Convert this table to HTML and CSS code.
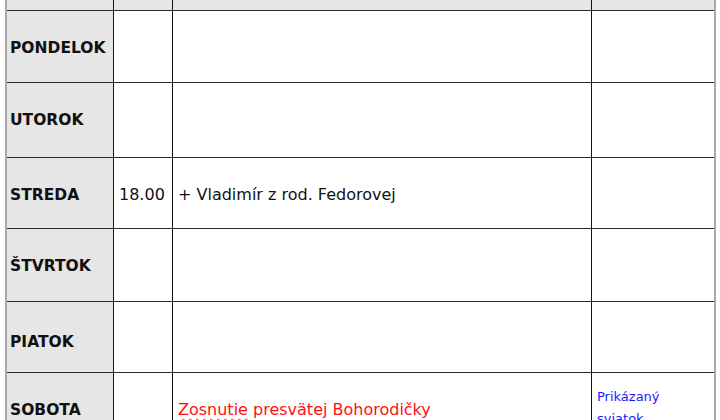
FILE: index.html
```html
<!DOCTYPE html>
<html lang="sk">
<head>
<meta charset="utf-8">
<title>Rozpis</title>
<link rel="stylesheet" href="styles.css">
</head>
<body>
<div class="sheet">
  <div class="cell head c1"></div>
  <div class="cell head c2"></div>
  <div class="cell head c3"></div>
  <div class="cell head c4"></div>

  <div class="cell day r1">PONDELOK</div>
  <div class="cell c2 r1"></div>
  <div class="cell c3 r1"></div>
  <div class="cell c4 r1"></div>

  <div class="cell day r2">UTOROK</div>
  <div class="cell c2 r2"></div>
  <div class="cell c3 r2"></div>
  <div class="cell c4 r2"></div>

  <div class="cell day r3">STREDA</div>
  <div class="cell c2 r3">18.00</div>
  <div class="cell c3 r3">+ Vladimír z rod. Fedorovej</div>
  <div class="cell c4 r3"></div>

  <div class="cell day r4">ŠTVRTOK</div>
  <div class="cell c2 r4"></div>
  <div class="cell c3 r4"></div>
  <div class="cell c4 r4"></div>

  <div class="cell day r5">PIATOK</div>
  <div class="cell c2 r5"></div>
  <div class="cell c3 r5"></div>
  <div class="cell c4 r5"></div>

  <div class="cell day r6">SOBOTA</div>
  <div class="cell c2 r6"></div>
  <div class="cell c3 r6"><span class="feast"><span class="spell">Zosnutie</span> presvätej Bohorodičky</span></div>
  <div class="cell c4 r6 note">Prikázaný sviatok</div>
</div>
</body>
</html>
```
FILE: styles.css
```css
html, body {
  margin: 0;
  padding: 0;
  background: #ffffff;
  overflow: hidden;
}

.sheet {
  margin-left: 5px;
  width: 707px;
  border-left: 2px solid #a8a8a8;
  border-right: 2px solid #a8a8a8;
  display: grid;
  grid-template-columns: 107px 59px 419px 122px;
  grid-template-rows: 11px 72px 75px 71px 73px 71px 80px;
  font-family: "DejaVu Sans", sans-serif;
  font-size: 16px;
  color: #111;
}

.cell {
  box-sizing: border-box;
  border-right: 1px solid #111111;
  border-bottom: 1px solid #2a2a2a;
  padding: 26px 5px 0 5px;
  line-height: 22px;
  white-space: nowrap;
}

.c4 {
  border-right: none;
}

.head {
  background: #e6e6e6;
  padding: 0;
}

.day {
  background: #e6e6e6;
  font-weight: bold;
  font-size: 15.5px;
  padding-left: 3px;
}

.r5 {
  padding-top: 29px;
}

.feast {
  color: #ff1010;
}

.spell {
  text-decoration: underline wavy #ff3030;
  text-decoration-thickness: 1px;
  text-underline-offset: 3px;
}

.note {
  color: #1a1aff;
  font-size: 13px;
  white-space: normal;
  padding-top: 13px;
  padding-left: 5px;
}
```
